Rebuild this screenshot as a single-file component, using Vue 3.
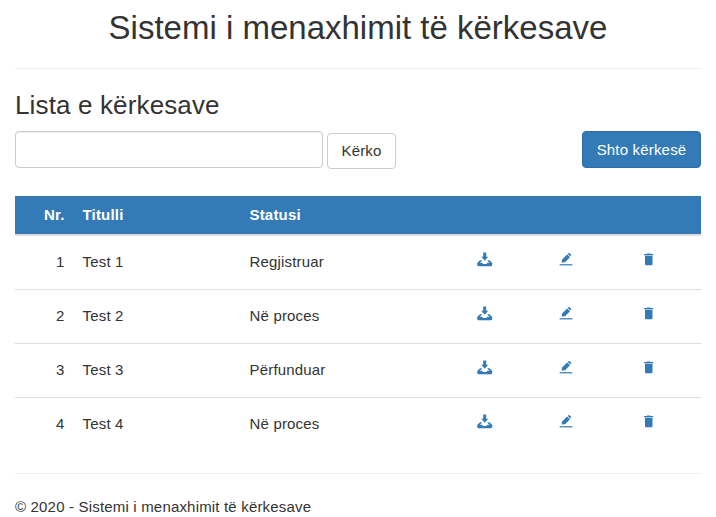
<script setup>
const rows = [
  { id: 1, title: 'Test 1', status: 'Regjistruar' },
  { id: 2, title: 'Test 2', status: 'Në proces' },
  { id: 3, title: 'Test 3', status: 'Përfunduar' },
  { id: 4, title: 'Test 4', status: 'Në proces' },
]
</script>

<template>
  <div class="page">
    <h1>Sistemi i menaxhimit të kërkesave</h1>
    <hr />
    <h2>Lista e kërkesave</h2>
    <div class="toolbar">
      <input type="text" class="search" aria-label="Kërko" />
      <button type="button" class="btn find">Kërko</button>
      <button type="button" class="btn add">Shto kërkesë</button>
    </div>
    <div class="table">
      <div class="row head">
        <span class="nr">Nr.</span><span>Titulli</span><span>Statusi</span>
      </div>
      <div v-for="r in rows" :key="r.id" class="row">
        <span class="nr">{{ r.id }}</span>
        <span>{{ r.title }}</span>
        <span>{{ r.status }}</span>
        <svg class="icon" viewBox="0 0 16 16">
          <path d="M6.200.4h3v4.400h2L7.700 8.700 4.200 4.800h2z" />
          <path d="M3 8.200h1.800v.8L2.700 10.700h2.200l1.200 1.300h3.200l1.200-1.300h2.200L10.600 9v-.8h1.800l2.800 2.900v1.500q0 1.700-1.100 1.700H1.300Q.2 14.300.2 12.600v-1.500z" />
        </svg>
        <svg class="icon" viewBox="0 0 16 16">
          <path d="M2.600 10.600l.5-3.200 5-5 2.900 2.900-5 5zM8.700 1.900l.8-.7q.6-.6 1.200 0l1.200 1.200q.6.600 0 1.200l-.6.800z" />
          <path d="M.6 12.200h12.800v1.200H.6z" />
        </svg>
        <svg class="icon" viewBox="0 0 16 16">
          <path d="M6.100 1.500h3l.6.600h2.500v1.200H3V2.100h2.500z" />
          <path d="M4 3.800h7.500v8.400q0 1-1 1H5q-1 0-1-1z" />
        </svg>
      </div>
    </div>
    <hr class="bottom" />
    <footer>© 2020 - Sistemi i menaxhimit të kërkesave</footer>
  </div>
</template>

<style>
body {
  background: #fff;
}
</style>

<style scoped>
.page {
  box-sizing: border-box;
  height: 517px;
  padding: 10px 15px 0;
  overflow: hidden;
  font: 15px/21px "Liberation Sans", Arial, sans-serif;
  letter-spacing: 0.180px;
  color: #333;
}
h1,
h2 {
  margin: 0;
  font-weight: 400;
}
h1 {
  height: 58px;
  font-size: 33px;
  line-height: 36px;
  letter-spacing: 0;
  text-align: center;
}
hr {
  height: 1px;
  margin: 0;
  border: 0;
  background: #eee;
}
h2 {
  height: 40px;
  margin-top: 22px;
  font-size: 26px;
  line-height: 29px;
  letter-spacing: 0.140px;
}
.toolbar {
  display: flex;
  align-items: flex-start;
  height: 65px;
}
.search {
  box-sizing: border-box;
  width: 308px;
  height: 37px;
  border: 1px solid #ccc;
  border-radius: 4px;
  background: #fff;
  box-shadow: inset 0 1px 1px rgba(0, 0, 0, 0.075);
}
.btn {
  box-sizing: border-box;
  padding: 0;
  border: 1px solid #ccc;
  border-radius: 4px;
  background: #fff;
  font: inherit;
  letter-spacing: inherit;
  color: #333;
}
.find {
  width: 69px;
  height: 36px;
  margin: 2px 0 0 4px;
  padding-bottom: 1px;
}
.add {
  width: 119px;
  height: 37px;
  margin-left: auto;
  background: #337ab7;
  border-color: #2e6da4;
  color: #fff;
}
.row {
  display: grid;
  grid-template-columns: 59px 167px 227px 82px 82px 69px;
  box-sizing: border-box;
  height: 54px;
  padding-top: 15px;
  border-top: 1px solid #ddd;
}
.row > span {
  padding-left: 8.500px;
}
.row > .nr {
  padding: 0 9.500px 0 0;
  text-align: right;
}
.head {
  height: 40px;
  padding-top: 8px;
  border-top: 0;
  border-bottom: 2px solid #ddd;
  background: #337ab7;
  background-clip: padding-box;
  color: #fff;
  font-weight: 700;
}
.head + .row {
  height: 53px;
  border-top: 0;
}
.icon {
  width: 16px;
  height: 16px;
  margin-top: 1px;
  margin-left: 9px;
  fill: #337ab7;
}
.bottom {
  margin-top: 22px;
}
footer {
  margin-top: 22px;
}
</style>
